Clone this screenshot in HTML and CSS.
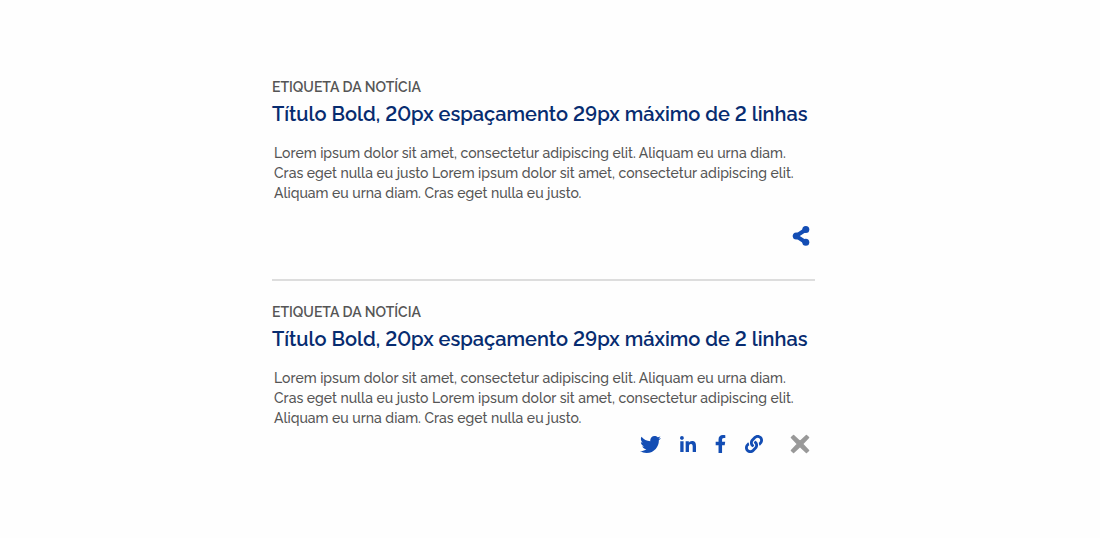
FILE: index.html
```html
<!DOCTYPE html>
<html lang="pt-BR">
<head>
<meta charset="utf-8">
<meta name="viewport" content="width=device-width, initial-scale=1">
<title>Notícias</title>
<link rel="stylesheet" href="styles.css">
</head>
<body>
<main class="news-list">
  <article class="news">
    <p class="news-label">ETIQUETA DA NOTÍCIA</p>
    <h2 class="news-title">Título Bold, 20px espaçamento 29px máximo de 2 linhas</h2>
    <p class="news-text">Lorem ipsum dolor sit amet, consectetur adipiscing elit. Aliquam eu urna diam. Cras eget nulla eu justo Lorem ipsum dolor sit amet, consectetur adipiscing elit. Aliquam eu urna diam. Cras eget nulla eu justo.</p>
    <div class="actions actions-closed">
      <button class="action" type="button" aria-label="Compartilhar">
        <svg class="icon-share" viewBox="0 0 18 20" aria-hidden="true"><path d="M14 3.500 4 10l10 6.500" fill="none" stroke="currentColor" stroke-width="4"/><circle cx="13.800" cy="3.500" r="3.500"/><circle cx="4.300" cy="10" r="3.500"/><circle cx="13.800" cy="16.200" r="3.500"/></svg>
      </button>
    </div>
  </article>
  <article class="news">
    <p class="news-label">ETIQUETA DA NOTÍCIA</p>
    <h2 class="news-title">Título Bold, 20px espaçamento 29px máximo de 2 linhas</h2>
    <p class="news-text">Lorem ipsum dolor sit amet, consectetur adipiscing elit. Aliquam eu urna diam. Cras eget nulla eu justo Lorem ipsum dolor sit amet, consectetur adipiscing elit. Aliquam eu urna diam. Cras eget nulla eu justo.</p>
    <div class="actions actions-open">
      <div class="networks">
        <a class="action" href="#" aria-label="Twitter">
          <svg class="icon-twitter" viewBox="0 0 512 512" aria-hidden="true"><path d="M459.370 151.716c.325 4.548.325 9.097.325 13.645 0 138.720-105.583 298.558-298.558 298.558-59.452 0-114.680-17.219-161.137-47.106 8.447.974 16.568 1.299 25.340 1.299 49.055 0 94.213-16.568 130.274-44.832-46.132-.975-84.792-31.188-98.112-72.772 6.498.974 12.995 1.624 19.818 1.624 9.421 0 18.843-1.300 27.614-3.573-48.081-9.747-84.143-51.980-84.143-102.985v-1.299c13.969 7.797 30.214 12.670 47.431 13.319-28.264-18.843-46.781-51.005-46.781-87.391 0-19.492 5.197-37.360 14.294-52.954 51.655 63.675 129.300 105.258 216.365 109.807-1.624-7.797-2.599-15.918-2.599-24.040 0-57.828 46.782-104.934 104.934-104.934 30.213 0 57.502 12.670 76.670 33.137 23.715-4.548 46.456-13.320 66.599-25.340-7.798 24.366-24.366 44.833-46.132 57.827 21.117-2.273 41.584-8.122 60.426-16.243-14.292 20.791-32.161 39.308-52.628 54.253z"/></svg>
        </a>
        <a class="action" href="#" aria-label="LinkedIn">
          <svg class="icon-linkedin" viewBox="0 0 448 448" aria-hidden="true"><path d="M100.280 448H7.400V148.900h92.880zM53.790 108.100C24.090 108.100 0 83.500 0 53.800a53.790 53.790 0 0 1 107.580 0c0 29.700-24.100 54.300-53.790 54.300zM447.900 448h-92.680V302.400c0-34.700-.7-79.200-48.290-79.200-48.290 0-55.690 37.700-55.690 76.700V448h-92.780V148.900h89.080v40.800h1.300c12.400-23.500 42.690-48.300 87.880-48.300 94 0 111.280 61.900 111.280 142.300V448z"/></svg>
        </a>
        <a class="action" href="#" aria-label="Facebook">
          <svg class="icon-facebook" viewBox="10 0 300 512" aria-hidden="true"><path d="M279.140 288l14.220-92.660h-88.910v-60.130c0-25.350 12.420-50.060 52.240-50.060h40.420V6.260S260.430 0 225.360 0c-73.220 0-121.080 44.380-121.080 124.720v70.620H22.890V288h81.390v224h100.170V288z"/></svg>
        </a>
        <a class="action" href="#" aria-label="Copiar link">
          <svg class="icon-link" viewBox="0 0 512 512" aria-hidden="true"><path d="M326.612 185.391c59.747 59.809 58.927 155.698.36 214.590-.11.12-.24.25-.36.37l-67.200 67.200c-59.270 59.270-155.699 59.262-214.960 0-59.270-59.260-59.270-155.700 0-214.960l37.106-37.106c9.840-9.840 26.786-3.300 27.294 10.606.648 17.722 3.826 35.527 9.690 52.721 1.986 5.822.567 12.262-3.783 16.612l-13.087 13.087c-28.026 28.026-28.905 73.660-1.155 101.960 28.024 28.579 74.086 28.749 102.325.51l67.200-67.190c28.191-28.191 28.073-73.757 0-101.830-3.701-3.694-7.429-6.564-10.341-8.569a16.037 16.037 0 0 1-6.947-12.606c-.396-10.567 3.348-21.456 11.698-29.806l21.054-21.055c5.521-5.521 14.182-6.199 20.584-1.731a152.482 152.482 0 0 1 20.522 17.197zM467.547 44.449c-59.261-59.262-155.690-59.270-214.960 0l-67.200 67.200c-.12.12-.25.25-.36.37-58.566 58.892-59.387 154.781.36 214.590a152.454 152.454 0 0 0 20.521 17.196c6.402 4.468 15.064 3.789 20.584-1.731l21.054-21.055c8.350-8.350 12.094-19.239 11.698-29.806a16.037 16.037 0 0 0-6.947-12.606c-2.912-2.005-6.640-4.875-10.341-8.569-28.073-28.073-28.191-73.639 0-101.830l67.200-67.190c28.239-28.239 74.300-28.069 102.325.51 27.750 28.300 26.872 73.934-1.155 101.960l-13.087 13.087c-4.350 4.350-5.769 10.790-3.783 16.612 5.864 17.194 9.042 34.999 9.690 52.721.509 13.906 17.454 20.446 27.294 10.606l37.106-37.106c59.271-59.259 59.271-155.699.001-214.959z"/></svg>
        </a>
      </div>
      <button class="action action-close" type="button" aria-label="Fechar">
        <svg class="icon-close" viewBox="0 0 20 20" aria-hidden="true"><path d="M3.600 1.400 10 7.500 16.400 1.400 18.600 3.600 12.500 10 18.600 16.400 16.400 18.600 10 12.500 3.600 18.600 1.400 16.400 7.500 10 1.400 3.600z" stroke="currentColor" stroke-width="1.400" stroke-linejoin="round"/></svg>
      </button>
    </div>
  </article>
</main>
</body>
</html>
```
FILE: styles.css
```css
* {
  box-sizing: border-box;
}

body {
  margin: 0;
  padding: 77px 29px 64px 16px;
  background: #fefefe;
  color: #555;
  font-family: Raleway, Lato, "Open Sans", sans-serif;
  font-variant-numeric: lining-nums;
}

.news-list {
  max-width: 543px;
  margin: 0 auto;
}

.news + .news {
  margin-top: 21px;
}

.news:first-child {
  border-bottom: 2px solid #ddd;
}

.news-label {
  margin: 0;
  font-size: 14px;
  font-weight: 600;
  line-height: 20px;
}

.news-title {
  margin: 3px 0 0;
  color: #072c70;
  font-size: 20px;
  font-weight: 600;
  line-height: 29px;
}

.news-text {
  margin: 14px 0 0;
  padding: 0 16px 0 2px;
  font-size: 14px;
  font-weight: 500;
  line-height: 20px;
}

.actions {
  display: flex;
  align-items: center;
  justify-content: flex-end;
  height: 28px;
  padding-right: 5px;
}

.actions-closed {
  margin: 19px 0 29px;
}

.actions-open {
  gap: 27px;
  margin-top: 2px;
}

.networks {
  display: flex;
  align-items: center;
  gap: 19px;
}

.action {
  display: flex;
  padding: 0;
  border: 0;
  background: none;
  color: #134db4;
  cursor: pointer;
}

.action-close {
  color: #999;
}

.action svg {
  display: block;
  fill: currentColor;
}

.icon-share {
  width: 18px;
  height: 20px;
}

.icon-twitter {
  width: 21px;
  height: 21px;
}

.icon-linkedin {
  width: 16px;
  height: 16px;
}

.icon-facebook {
  width: 11px;
  height: 18px;
}

.icon-link {
  width: 18px;
  height: 18px;
}

.icon-close {
  width: 20px;
  height: 20px;
}
```
